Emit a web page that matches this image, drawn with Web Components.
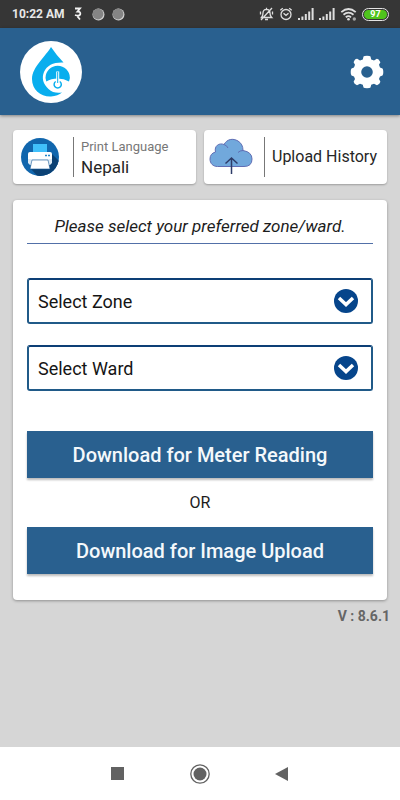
<!DOCTYPE html>
<html lang="en">
<head>
<meta charset="utf-8">
<meta name="viewport" content="width=device-width, initial-scale=1">
<title>Meter Reading</title>
<style>
html, body { margin: 0; min-height: 100%; background: #d6d6d6; }
body { font-family: Roboto, "Liberation Sans", sans-serif; color: #1c1c1c; }
</style>
</head>
<body>
<meter-app></meter-app>

<script>
const define = (name, html, setup) => {
  const template = document.createElement('template');
  template.innerHTML = `<style>*{box-sizing:border-box} svg{display:block;flex:none}</style>` + html;
  customElements.define(name, class extends HTMLElement {
    constructor() {
      super();
      this.attachShadow({ mode: 'open' }).append(template.content.cloneNode(true));
    }
    connectedCallback() { if (setup) setup(this, this.shadowRoot); }
  });
};

define('status-bar', `
<style>
:host { display: flex; align-items: center; justify-content: space-between; height: 28px; padding: 0 11px 0 12px; background: #363636; color: #e8e8e8; }
.side, .notices { display: flex; align-items: center; }
.left { gap: 10px; }
.notices { gap: 7px; }
time { font-size: 12px; line-height: 16px; font-weight: 700; }
.right { gap: 5px; }
.battery { width: 27px; height: 13px; border: 1px solid #e4e4e4; border-radius: 7px; padding: 1px; }
.level { display: block; height: 9px; border-radius: 5px; background: #4fc41c; color: #fff; font-size: 9px; line-height: 9px; font-weight: 700; text-align: center; }
</style>
<div class="side left">
  <time>10:22 AM</time>
  <svg width="8" height="14" viewBox="0 0 8 14" fill="none" stroke="#f2f2f2" stroke-width="1.800"><path d="M1 1.500H6L3.500 4.500Q7 4.500 6.200 7.500Q5 9.500 1 8M3.500 9.500L6 12.500"/></svg>
  <div class="notices">
    <svg width="13" height="13" viewBox="0 0 13 13"><circle cx="6.5" cy="6.5" r="6" fill="#d0d0d0"/><circle cx="6" cy="6" r="5.4" fill="#858585"/></svg>
    <svg width="13" height="13" viewBox="0 0 13 13"><circle cx="6.5" cy="6.5" r="6" fill="#d0d0d0"/><circle cx="6" cy="6" r="5.4" fill="#858585"/></svg>
  </div>
</div>
<div class="side right">
  <svg width="15" height="14" viewBox="0 0 14 14" fill="none" stroke="#dedede" stroke-width="1.3"><path d="M2 10.5Q3.5 9 3.5 6Q3.5 2.5 7 2.3Q10.500 2.500 10.500 6Q10.500 9 12.200 10.500ZM5.500 12.500H8.500M7 .8V2.300M12.500 1L1.500 13M1 4.500V7.500M13 4.500V7.500"/></svg>
  <svg width="14" height="14" viewBox="0 0 13 14" fill="none" stroke="#dedede" stroke-width="1.300"><circle cx="6.500" cy="7.500" r="5"/><path d="M.8 3.300L3.300 1.200M12.200 3.300L9.700 1.200M4 6.300L6.500 8.300L9 6.300"/></svg>
  <svg width="16" height="12" viewBox="0 0 16 12" fill="#dedede"><path d="M0 10h2v2H0zM3.400 8.500h2V12h-2zM6.800 6h2v6h-2zM10.200 3.500h2V12h-2zM13.600 0h2v12h-2z"/></svg>
  <svg width="16" height="12" viewBox="0 0 16 12" fill="#dedede"><path d="M0 10h2v2H0zM3.400 8.500h2V12h-2zM6.800 6h2v6h-2zM10.200 3.500h2V12h-2zM13.600 0h2v12h-2z"/></svg>
  <svg width="17" height="13" viewBox="0 0 16 13" fill="none" stroke="#dedede" stroke-width="1.800"><path d="M.8 4.200Q8-2.200 15.200 4.200M3 6.800Q8 2.500 13 6.800M5.300 9.300Q8 7 10.500 9.300"/><circle cx="8" cy="11.300" r="1.300" fill="#dedede" stroke="none"/><circle cx="13.800" cy="11" r="1.700" fill="#a5a5a5" stroke="none"/></svg>
  <div class="battery"><span class="level">97</span></div>
</div>`);

define('app-header', `
<style>
:host { display: flex; align-items: center; justify-content: space-between; height: 87px; padding: 0 16px 0 20px; background: #29608f; box-shadow: 0 1px 3px #0006; }
button { border: 0; padding: 0; background: none; cursor: pointer; }
</style>
<svg width="62" height="62" viewBox="0 0 62 62" role="img" aria-label="Water meter logo">
  <circle cx="31" cy="31" r="31" fill="#fff"/>
  <path d="M31 6C26 15 12 26 12 38C12 49 21 56 31 55.500Q38 55 42 51.500Q34 53 28.500 48C23 43 21.500 37 24 31C27 24 34 21 43.500 21.500Q37 15 31 6Z" fill="#09aeee"/>
  <path d="M25.500 37A12.200 12.200 0 0 1 49.900 37L49 40.500Q44 37.500 37.700 37.500Q31 37.500 26.300 40.500Z" fill="#09aeee"/>
  <path d="M36.200 30.500H39.200V38H36.200Z" fill="#fff"/>
  <path d="M37.700 31V42" stroke="#09aeee" stroke-width="1"/>
  <path d="M35.700 40.500A3.600 3.600 0 1 0 39.700 40.500" fill="none" stroke="#09aeee" stroke-width="1.500"/>
</svg>
<button aria-label="Settings"><svg width="34" height="34" viewBox="0 0 34 34" fill="#fff"><path fill-rule="evenodd" d="M13.500 1.500Q14 .7 17 .7Q20 .7 20.500 1.500L21.200 4.500L24 5.500L26.800 3.800Q28.500 3.600 30.400 7.200L29 9.800L30 12.500L32.500 13.500Q33.300 14 33.300 17Q33.300 20 32.500 20.500L30 21.500L29 24L30.400 26.800Q30 29 27 30.300L24 28.800L21.200 29.800L20.500 32.500Q20 33.300 17 33.300Q14 33.300 13.500 32.500L12.800 29.800L10 28.800L7 30.300Q4 29 3.600 26.800L5 24L4 21.500L1.500 20.500Q.7 20 .7 17Q.7 14 1.500 13.500L4 12.500L5 9.800L3.600 7.200Q5 3.600 7.200 3.800L10 5.500L12.800 4.500ZM17 11.200A5.800 5.800 0 1 0 17 22.800A5.800 5.800 0 1 0 17 11.200Z"/></svg></button>`);

define('action-card', `
<style>
:host { display: block; min-width: 0; }
button { display: flex; align-items: center; width: 100%; height: 54px; border: 0; border-radius: 4px; padding: 0 0 0 5px; background: #fff; box-shadow: 0 1px 2px #0004; font: inherit; color: #262626; text-align: left; cursor: pointer; }
.icon { flex: none; display: grid; place-items: center; width: 44px; }
.text { margin-left: 11px; border-left: 1px solid #777; height: 40px; padding-left: 7px; display: flex; flex-direction: column; justify-content: center; white-space: nowrap; }
</style>
<button><span class="icon"><slot name="icon"></slot></span><span class="text"><slot></slot></span></button>`);

define('select-field', `
<style>
:host { display: grid; align-items: center; }
select { grid-area: 1 / 1; width: 100%; height: 46px; appearance: none; border: 2px solid #205a88; border-top-color: #0d3f76; border-radius: 3px; background: #fff; padding: 0 48px 0 9px; font: inherit; font-size: 18px; color: #151515; }
svg { grid-area: 1 / 1; justify-self: end; margin-right: 15px; pointer-events: none; }
</style>
<select><option></option></select>
<svg width="24" height="24" viewBox="0 0 24 24"><circle cx="12" cy="12" r="12" fill="#06458b"/><path d="M5 9L12 15.500L19 9" fill="none" stroke="#fff" stroke-width="3.500"/></svg>`,
(host, root) => {
  root.querySelector('option').textContent = host.getAttribute('label');
  root.querySelector('select').setAttribute('aria-label', host.getAttribute('label'));
});

define('primary-button', `
<style>
:host { display: block; }
button { width: 100%; height: 47px; border: 0; padding: 0; background: #29608f; color: #f4f8fb; box-shadow: 0 2px 2px #0004; font: inherit; font-size: 20px; font-weight: 500; cursor: pointer; }
</style>
<button><slot></slot></button>`);

define('zone-panel', `
<style>
:host { display: flex; flex-direction: column; padding: 12px 14px 26px; border-radius: 4px; background: #fff; box-shadow: 0 1px 3px #0005; }
h1 { margin: 0 0 34px; padding: 2px 0 5px; border-bottom: 1px solid #5270a8; font-size: 17px; line-height: 24px; font-weight: 400; font-style: italic; text-align: center; }
.fields { display: grid; gap: 21px; margin-bottom: 40px; }
p { margin: 0; font-size: 16px; line-height: 49px; text-align: center; }
</style>
<h1>Please select your preferred zone/ward.</h1>
<div class="fields"><select-field label="Select Zone"></select-field><select-field label="Select Ward"></select-field></div>
<primary-button>Download for Meter Reading</primary-button>
<p>OR</p>
<primary-button>Download for Image Upload</primary-button>`);

define('nav-bar', `
<style>
:host { display: flex; align-items: center; justify-content: center; gap: 58px; height: 53px; background: #fff; }
button { display: grid; place-items: center; width: 24px; height: 24px; border: 0; padding: 0; background: none; }
</style>
<button aria-label="Recent apps"><svg width="14" height="14"><rect width="13" height="13" fill="#626262"/></svg></button>
<button aria-label="Home"><svg width="20" height="20" viewBox="0 0 20 20"><circle cx="10" cy="10" r="9.200" fill="none" stroke="#626262" stroke-width="1.300"/><circle cx="10" cy="10" r="6.500" fill="#626262"/></svg></button>
<button aria-label="Back"><svg width="14" height="16" viewBox="0 0 14 16"><path d="M0 8L13 1V15Z" fill="#626262"/></svg></button>`);

define('meter-app', `
<style>
:host { display: flex; flex-direction: column; min-height: 100vh; background: #d6d6d6; }
main { flex: 1; padding: 15px 13px 0; }
.actions { display: grid; grid-template-columns: 1fr 1fr; gap: 8px; margin-bottom: 16px; }
.caption { font-size: 13px; line-height: 20px; color: #777; }
.value { font-size: 17px; line-height: 20px; }
.history { font-size: 16px; line-height: 20px; }
.version { margin: 6px -3px 0 0; font-size: 14px; line-height: 20px; font-weight: 700; text-align: right; color: #666; }
</style>
<status-bar></status-bar>
<app-header></app-header>
<main>
  <div class="actions">
    <action-card>
      <svg slot="icon" width="38" height="38" viewBox="0 0 38 38"><defs><clipPath id="disc"><circle cx="19" cy="19" r="19"/></clipPath></defs><g clip-path="url(#disc)"><rect width="38" height="38" fill="#1166ad"/><path d="M31 16L42 27V42H20L10 31Z" fill="#0b4174"/><path d="M12 6H26V17H12Z" fill="#40c0fb"/><path d="M9 14H29Q31 14 31 16V25H7V16Q7 14 9 14Z" fill="#fff"/><path d="M7 21H31V25L29 27H9L7 25Z" fill="#dceaf5"/><path d="M11 22H27L29 31H9Z" fill="#fff" stroke="#1b5d99" stroke-width=".6"/><path d="M24 17.500H26M27 17.500H29" stroke="#2486c9" stroke-width="1.500"/></g></svg>
      <span class="caption">Print Language</span><span class="value">Nepali</span>
    </action-card>
    <action-card>
      <svg slot="icon" width="44" height="38" viewBox="0 0 44 38"><path d="M8.500 28.500C4 28.500 1 25.500 1 21Q1 15.500 6.500 14C5 8 10 4.500 15 6.500C18 1 24 0 29 3Q34 6 34 12.500Q43 14 43 21Q43 28.500 35 28.500Z" fill="#71a8dc" stroke="#606eb4" stroke-width="1"/><path d="M15 6.500Q18 7.500 19 10M34 12.500Q31 12.500 29 14.500" fill="none" stroke="#606eb4" stroke-width="1"/><path d="M22.500 36V20M16.500 25.500L22.500 20L28.500 25.500" fill="none" stroke="#2d3c68" stroke-width="1.500"/></svg>
      <span class="history">Upload History</span>
    </action-card>
  </div>
  <zone-panel></zone-panel>
  <p class="version">V : 8.6.1</p>
</main>
<nav-bar></nav-bar>`);
</script>
</body>
</html>
